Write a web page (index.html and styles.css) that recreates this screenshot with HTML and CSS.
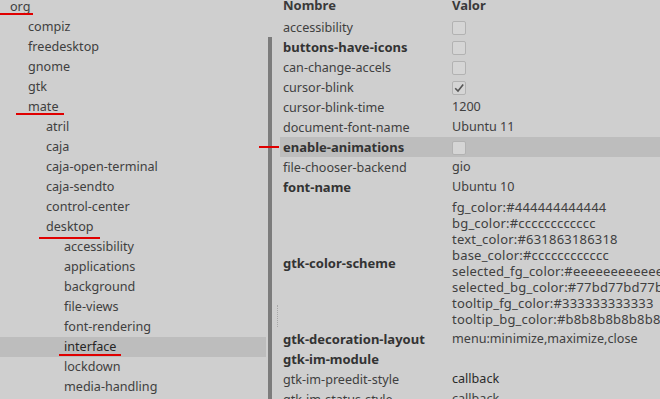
FILE: index.html
```html
<!DOCTYPE html>
<html lang="es">
<head>
    <meta charset="UTF-8">
    <meta name="viewport" content="width=device-width, initial-scale=1.0">
    <title>dconf</title>
    <link rel="stylesheet" href="styles.css">
</head>
<body>
    <div class="window">
        <div class="tree">
            <div class="node l0">org<span class="mark mark-org"></span></div>
            <div class="node l1">compiz</div>
            <div class="node l1">freedesktop</div>
            <div class="node l1">gnome</div>
            <div class="node l1">gtk</div>
            <div class="node l1">mate<span class="mark mark-mate"></span></div>
            <div class="node l2">atril</div>
            <div class="node l2">caja</div>
            <div class="node l2">caja-open-terminal</div>
            <div class="node l2">caja-sendto</div>
            <div class="node l2">control-center</div>
            <div class="node l2">desktop<span class="mark mark-desktop"></span></div>
            <div class="node l3">accessibility</div>
            <div class="node l3">applications</div>
            <div class="node l3">background</div>
            <div class="node l3">file-views</div>
            <div class="node l3">font-rendering</div>
            <div class="node l3 selected">interface<span class="mark mark-interface"></span></div>
            <div class="node l3">lockdown</div>
            <div class="node l3">media-handling</div>
        </div>

        <div class="edge">
            <div class="edge-bar"></div>
            <div class="edge-grip"></div>
        </div>

        <div class="list">
            <div class="row head">
                <div class="name">Nombre</div>
                <div class="value">Valor</div>
            </div>
            <div class="row">
                <div class="name">accessibility</div>
                <div class="value"><span class="check"></span></div>
            </div>
            <div class="row">
                <div class="name bold">buttons-have-icons</div>
                <div class="value"><span class="check"></span></div>
            </div>
            <div class="row">
                <div class="name">can-change-accels</div>
                <div class="value"><span class="check"></span></div>
            </div>
            <div class="row">
                <div class="name">cursor-blink</div>
                <div class="value">
                    <span class="check"><svg width="12" height="12" viewBox="0 0 12 12"><polyline points="2.2,6.2 5,9 10.2,2.6" fill="none" stroke="#555" stroke-width="1.6"/></svg></span>
                </div>
            </div>
            <div class="row">
                <div class="name">cursor-blink-time</div>
                <div class="value">1200</div>
            </div>
            <div class="row">
                <div class="name">document-font-name</div>
                <div class="value">Ubuntu 11</div>
            </div>
            <div class="row selected">
                <span class="mark mark-enable"></span>
                <div class="name bold">enable-animations</div>
                <div class="value"><span class="check"></span></div>
            </div>
            <div class="row">
                <div class="name">file-chooser-backend</div>
                <div class="value">gio</div>
            </div>
            <div class="row">
                <div class="name bold">font-name</div>
                <div class="value">Ubuntu 10</div>
            </div>
            <div class="row">
                <div class="name bold">gtk-color-scheme</div>
                <div class="value scheme">
                    fg_color:#444444444444<br>
                    bg_color:#cccccccccccc<br>
                    text_color:#631863186318<br>
                    base_color:#cccccccccccc<br>
                    selected_fg_color:#eeeeeeeeeeee<br>
                    selected_bg_color:#77bd77bd77bd<br>
                    tooltip_fg_color:#333333333333<br>
                    tooltip_bg_color:#b8b8b8b8b8b8
                </div>
            </div>
            <div class="row">
                <div class="name bold">gtk-decoration-layout</div>
                <div class="value">menu:minimize,maximize,close</div>
            </div>
            <div class="row">
                <div class="name bold">gtk-im-module</div>
                <div class="value"></div>
            </div>
            <div class="row">
                <div class="name">gtk-im-preedit-style</div>
                <div class="value dark">callback</div>
            </div>
            <div class="row">
                <div class="name">gtk-im-status-style</div>
                <div class="value">callback</div>
            </div>
        </div>
    </div>
</body>
</html>
```

FILE: styles.css
```css
body {
    margin: 0;
    background-color: #cfcfcf;
    font-family: "Noto Sans", "DejaVu Sans", sans-serif;
    font-size: 12.6px;
    color: #404040;
    overflow: hidden;
}
.window {
    display: flex;
    height: 399px;
    overflow: hidden;
}

/* left tree */
.tree {
    width: 266px;
    flex: none;
    margin-top: -3px;
}
.node {
    position: relative;
    height: 20px;
    line-height: 20px;
    white-space: nowrap;
}
.l0 { padding-left: 10px; }
.l1 { padding-left: 28px; }
.l2 { padding-left: 46px; }
.l3 { padding-left: 64px; }
.node.selected {
    background-color: #bdbdbd;
    color: #262626;
}

/* pane edge */
.edge {
    display: flex;
    gap: 5px;
    flex: none;
    margin-left: 2px;
    width: 10px;
    margin-right: 2px;
}
.edge-bar {
    width: 4px;
    margin-top: 37px;
    background-color: #7c7c7c;
}
.edge-grip {
    width: 0;
    height: 22px;
    margin-top: 305px;
    border-left: 1px dotted #a8a8a8;
}

/* key list */
.list {
    flex: 1;
    min-width: 0;
}
.row {
    position: relative;
    display: flex;
    align-items: center;
    min-height: 20px;
}
.row.selected {
    background-color: #bdbdbd;
}
.row.head {
    margin-top: -5px;
    margin-bottom: 2px;
    font-weight: bold;
    font-size: 13px;
    color: #3a3a3a;
}
.name {
    width: 166px;
    flex: none;
    padding-left: 3px;
    white-space: nowrap;
}
.name.bold {
    font-weight: bold;
    font-size: 13px;
    color: #333;
}
.value {
    padding: 2px 0 2px 3px;
    line-height: 16px;
    white-space: nowrap;
}
.value.scheme {
    font-size: 13px;
    letter-spacing: 0.2px;
}
.value.dark {
    color: #2a2a2a;
}
.check {
    display: block;
    box-sizing: border-box;
    width: 14px;
    height: 14px;
    margin-top: 2px;
    border: 1px solid #b2b2b2;
    border-radius: 2px;
    background-color: #d5d5d5;
}
.check svg {
    display: block;
}

/* red annotation strokes */
.mark {
    position: absolute;
    height: 2px;
    background-color: #e00000;
}
.mark-org { left: 0; top: 16px; width: 33px; }
.mark-mate { left: 16px; top: 16px; width: 48px; }
.mark-desktop { left: 39px; top: 20px; width: 61px; }
.mark-interface { left: 59px; top: 17px; width: 62px; }
.mark-enable { left: -21px; top: 9px; width: 20px; z-index: 1; }
```
